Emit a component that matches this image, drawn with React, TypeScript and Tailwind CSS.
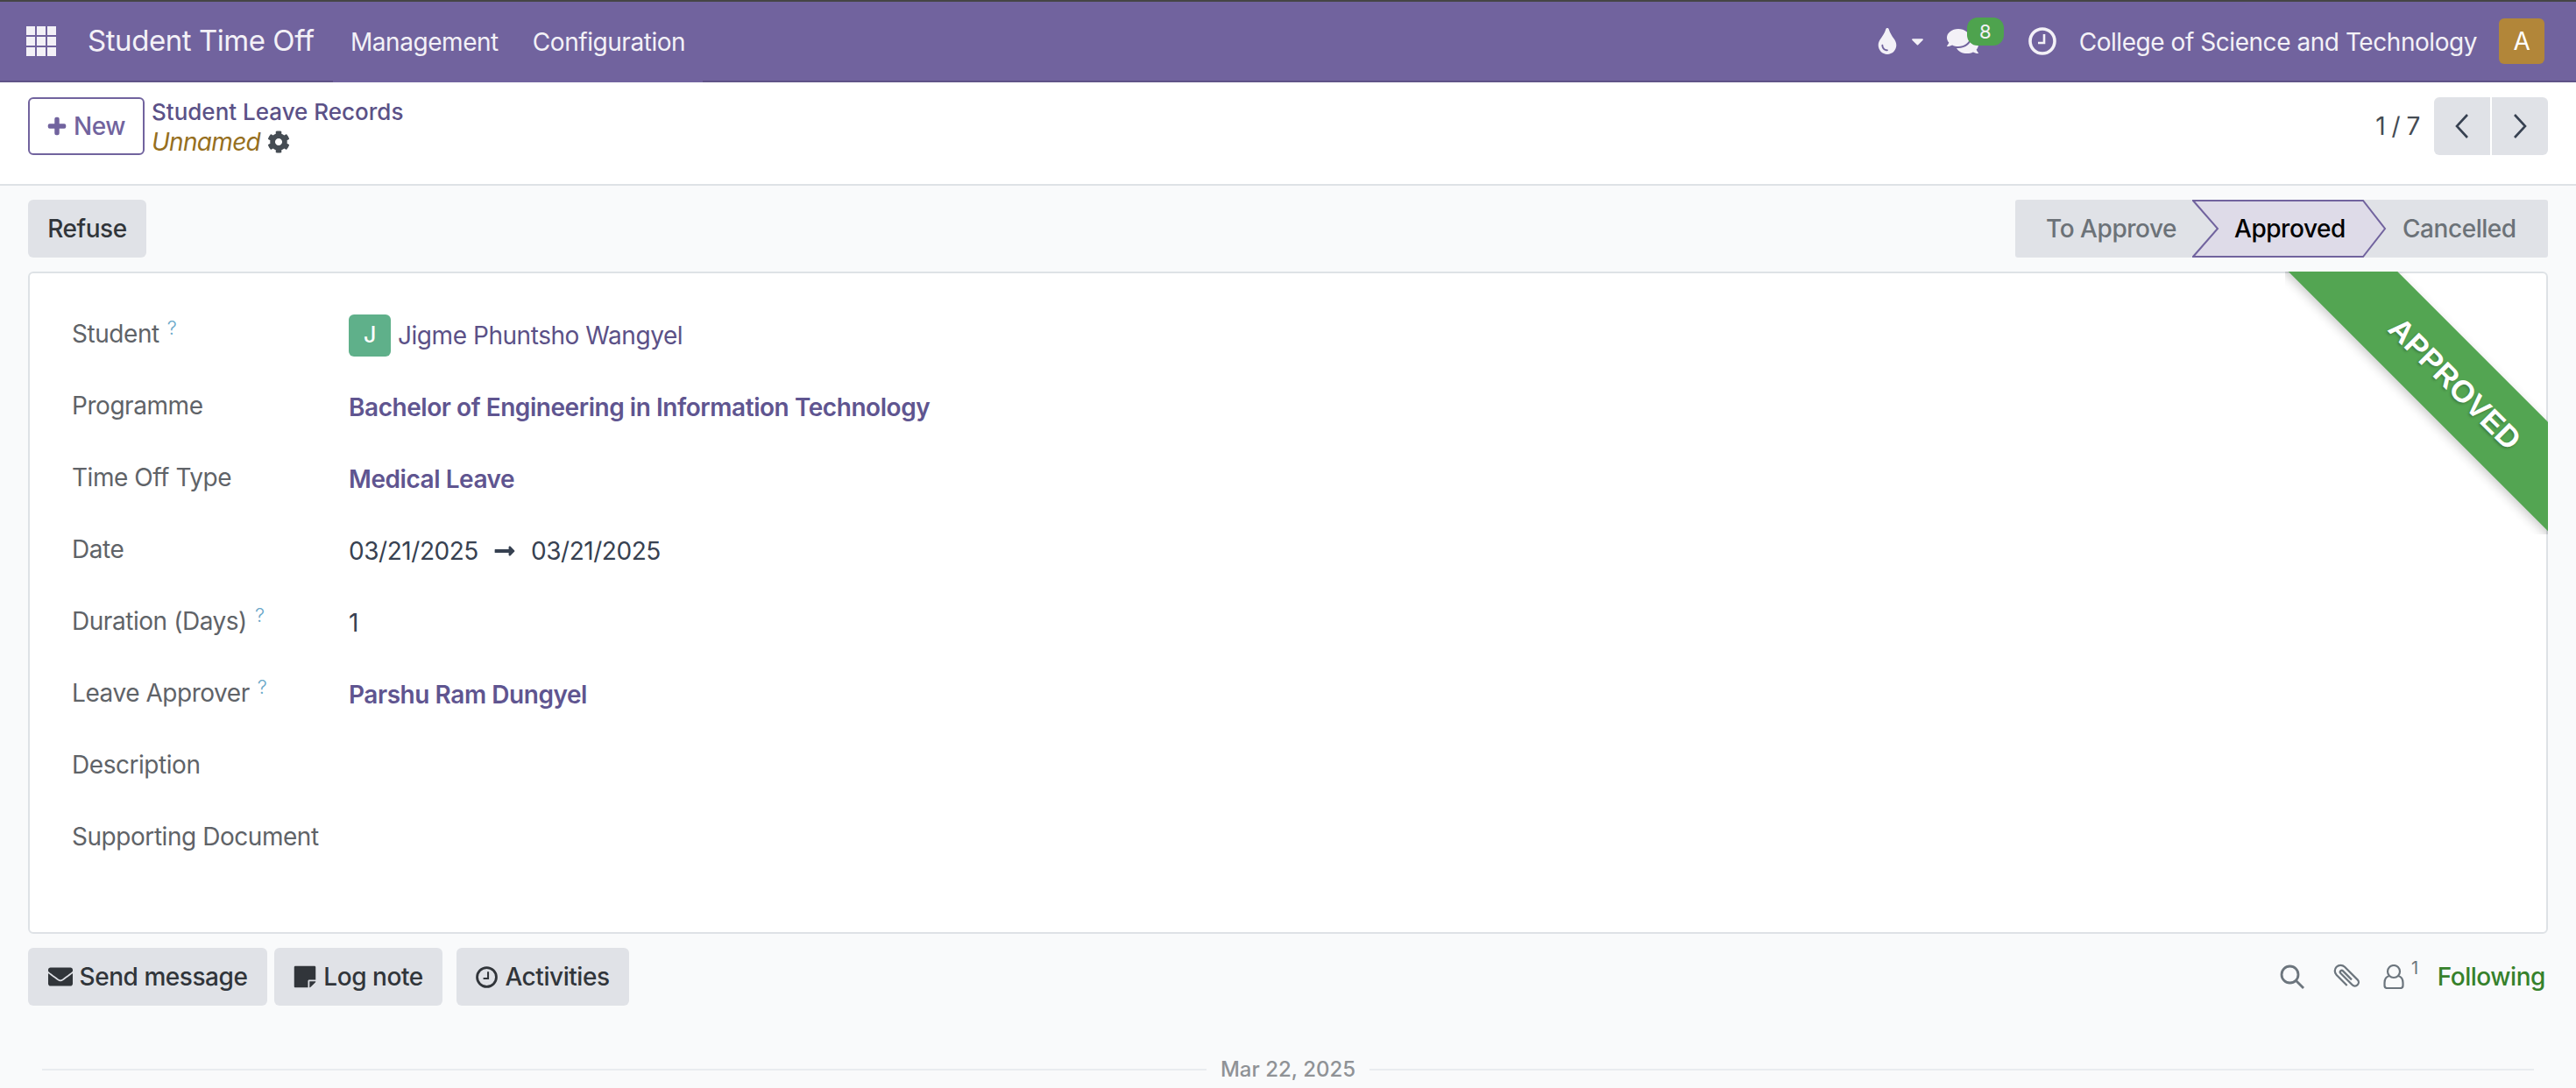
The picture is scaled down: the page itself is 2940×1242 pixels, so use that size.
import React from "react";
import {
  FaCaretDown,
  FaCog,
  FaComments,
  FaEnvelope,
  FaLongArrowAltRight,
  FaPlus,
  FaStickyNote,
  FaTint,
} from "react-icons/fa";

function Help() {
  return <sup className="ml-[9px] text-[22px] font-light text-[#6aa8c9] relative -top-[9px]">?</sup>;
}

function Field(props: { label: string; help?: boolean; children?: React.ReactNode }) {
  return (
    <div className="flex h-[82px] items-center">
      <div className="w-[316px] shrink-0 -mt-[4px] text-[#5f6368] whitespace-nowrap">
        {props.label}
        {props.help && <Help />}
      </div>
      <div className="flex items-center">{props.children}</div>
    </div>
  );
}

function AppsIcon() {
  const cells = [0, 1, 2, 3, 4, 5, 6, 7, 8];
  return (
    <div className="grid h-[34px] w-[34px] grid-cols-3 gap-[2px]">
      {cells.map((c) => (
        <div key={c} className="bg-[#f3f1f7]" />
      ))}
    </div>
  );
}

function ClockIcon(props: { size: number }) {
  return (
    <svg width={props.size} height={props.size} viewBox="0 0 32 32" fill="none" stroke="currentColor" strokeWidth="3.6">
      <circle cx="16" cy="16" r="14" />
      <path d="M18 8 V18 H11" strokeWidth="2.6" />
    </svg>
  );
}

function ChatterButton(props: { icon: React.ReactNode; label: string; width: string }) {
  return (
    <button className={`flex h-[66px] items-center justify-center gap-[8px] rounded-[6px] bg-[#e0e2e7] text-[#31353a] font-medium ${props.width}`}>
      {props.icon}
      {props.label}
    </button>
  );
}

function App() {
  return (
    <div className="h-[1242px] w-[2940px] overflow-hidden bg-[#f9fafb] text-[28px] tracking-[-0.45px] text-[#374151] font-['Inter',sans-serif]">
      <header className="flex h-[94px] items-center border-t-2 border-b-2 border-t-[#454545] border-b-[#5f5387] bg-[#71639e] text-[#f3f1f7]">
        <div className="ml-[30px] w-[70px]">
          <AppsIcon />
        </div>
        <span className="w-[300px] text-[33px] whitespace-nowrap">Student Time Off</span>
        <nav className="flex h-[92px] w-[422px] -ml-[20px] items-center gap-[39px] border-b-2 border-[#71639e] pl-[20px] translate-y-[1px]">
          <span className="translate-y-[1px]">Management</span>
          <span className="translate-y-[1px]">Configuration</span>
        </nav>
        <div className="ml-auto flex items-center pr-[36px]">
          <FaTint className="h-[30px] w-[22px]" />
          <FaCaretDown className="ml-[16px] h-[22px] w-[15px]" />
          <div className="relative ml-[25px] mr-[56px] h-[32px] w-[38px]">
            <FaComments className="h-[32px] w-[38px]" />
            <span className="absolute -top-[11px] left-[24px] flex h-[32px] w-[42px] items-center justify-center rounded-[12px] bg-[#4ea34e] text-[22px] text-[#f3f1f7]">8</span>
          </div>
          <ClockIcon size={32} />
          <span className="ml-[26px] translate-y-[1px] whitespace-nowrap">College of Science and Technology</span>
          <div className="ml-[25px] flex h-[52px] w-[52px] items-center justify-center rounded-[6px] bg-[#b28639] text-white">A</div>
        </div>
      </header>

      <div className="flex h-[118px] items-start justify-between border-b-2 border-[#dee2e6] bg-white pl-[32px] pr-[32px] pt-[17px]">
        <div className="flex">
          <button className="flex h-[66px] w-[133px] items-center justify-center gap-[8px] rounded-[6px] border-2 border-[#71639e] font-medium text-[#71639e]">
            <FaPlus className="h-[22px] w-[22px]" stroke="currentColor" strokeWidth={30} />
            New
          </button>
          <div className="ml-[8px]">
            <div className="h-[34px] text-[26px] leading-[34px] font-medium tracking-normal text-[#5b5187] whitespace-nowrap">Student Leave Records</div>
            <div className="flex h-[34px] items-center">
              <span className="italic tracking-[-0.7px] text-[#966f1e]">Unnamed</span>
              <FaCog className="ml-[8px] h-[26px] w-[26px] text-[#454c53]" />
            </div>
          </div>
        </div>
        <div className="flex items-center">
          <span className="mr-[16px] text-[#454c53]">1 / 7</span>
          <button className="flex h-[66px] w-[64px] items-center justify-center rounded-l-[6px] bg-[#e0e2e7]">
            <svg width="18" height="28" viewBox="0 0 18 28" fill="none" stroke="#374151" strokeWidth="2.6">
              <path d="M15 1 L3 14 L15 27" />
            </svg>
          </button>
          <button className="ml-[2px] flex h-[66px] w-[64px] items-center justify-center rounded-r-[6px] bg-[#e0e2e7]">
            <svg width="18" height="28" viewBox="0 0 18 28" fill="none" stroke="#374151" strokeWidth="2.6">
              <path d="M3 1 L15 14 L3 27" />
            </svg>
          </button>
        </div>
      </div>

      <div className="mt-[16px] flex h-[66px] items-stretch justify-between px-[32px]">
        <button className="w-[135px] rounded-[6px] bg-[#e0e2e7] font-medium text-[#31353a]">Refuse</button>
        <div className="flex w-[608px] rounded-[3px] bg-[#e0e2e7] font-medium text-[#6c7278]">
          <div className="flex w-[202px] items-center pl-[35px] whitespace-nowrap">To Approve</div>
          <div className="relative flex w-[222px] items-center pl-[48px] text-black">
            <svg className="absolute left-0 top-0" width="222" height="66" viewBox="0 0 222 66" fill="#dedbe8" stroke="#71639e" strokeWidth="2">
              <path d="M1 1 H195 L220 33 L195 65 H1 L29 33 Z" />
            </svg>
            <span className="relative">Approved</span>
          </div>
          <div className="flex flex-1 items-center pl-[18px]">Cancelled</div>
        </div>
      </div>

      <main className="relative mx-[32px] mt-[16px] h-[756px] rounded-[6px] border-2 border-[#dee2e6] bg-white pl-[48px] pt-[30px]">
        <Field label="Student" help>
          <div className="flex h-[48px] w-[48px] items-center justify-center rounded-[6px] bg-[#5fb08a] text-[25px] font-medium text-white">J</div>
          <span className="ml-[8px] text-[#5b5187] whitespace-nowrap">Jigme Phuntsho Wangyel</span>
        </Field>
        <Field label="Programme">
          <span className="font-semibold text-[#5f5590] whitespace-nowrap">Bachelor of Engineering in Information Technology</span>
        </Field>
        <Field label="Time Off Type">
          <span className="font-semibold text-[#5f5590]">Medical Leave</span>
        </Field>
        <Field label="Date">
          <span>03/21/2025</span>
          <FaLongArrowAltRight className="mx-[13px] h-[26px] w-[34px]" />
          <span>03/21/2025</span>
        </Field>
        <Field label="Duration (Days)" help>
          <span>1</span>
        </Field>
        <Field label="Leave Approver" help>
          <span className="font-semibold text-[#5f5590]">Parshu Ram Dungyel</span>
        </Field>
        <Field label="Description" />
        <Field label="Supporting Document" />

        <div className="absolute -right-[2px] -top-[2px] h-[300px] w-[300px] overflow-hidden">
          <div className="absolute left-[-56px] top-[84px] flex h-[88px] w-[500px] rotate-45 items-center justify-center bg-[#53a552] text-[35px] font-bold tracking-normal text-white font-['Liberation_Sans',sans-serif] shadow-[0_4px_12px_rgba(0,0,0,0.2)] [text-shadow:0_2px_3px_rgba(0,0,0,0.25)]">
            APPROVED
          </div>
        </div>
      </main>

      <div className="mt-[16px] flex h-[66px] items-center pl-[32px] pr-[35px]">
        <div className="flex gap-[8px]">
          <ChatterButton icon={<FaEnvelope className="h-[28px] w-[28px]" />} label="Send message" width="w-[273px]" />
          <ChatterButton icon={<FaStickyNote className="h-[28px] w-[26px]" />} label="Log note" width="w-[192px]" />
          <div className="ml-[8px]">
            <ChatterButton icon={<ClockIcon size={25} />} label="Activities" width="w-[197px]" />
          </div>
        </div>
        <div className="ml-auto flex items-center text-[#6c757d]">
          <svg width="28" height="28" viewBox="0 0 28 28" fill="none" stroke="#6c757d" strokeWidth="2.8">
            <circle cx="11.5" cy="11.5" r="9.5" />
            <path d="M18.5 18.5 L27 27" />
          </svg>
          <svg className="ml-[32px]" width="32" height="34" viewBox="-3 1 34 34" fill="none" stroke="#6c757d" strokeWidth="2.4">
            <path transform="rotate(-45 14 18)" d="M7 26 V8 a7 7 0 0 1 14 0 V30 a4.5 4.5 0 0 1 -9 0 V10 a2 2 0 0 1 4 0 V25" />
          </svg>
          <svg className="ml-[26px]" width="24" height="28" viewBox="0 0 24 28" fill="none" stroke="#6c757d" strokeWidth="2.2">
            <circle cx="12" cy="8" r="7" />
            <path d="M7 13 C3 14 1.5 17 1.5 21 V24 a3 3 0 0 0 3 3 H19.5 a3 3 0 0 0 3 -3 V21 C22.5 17 21 14 17 13" />
          </svg>
          <span className="ml-[8px] -mt-[20px] text-[20px]">1</span>
          <span className="ml-[22px] font-medium text-[#36812b]">Following</span>
        </div>
      </div>

      <div className="mx-[48px] mt-[55px] flex items-center">
        <div className="h-[2px] flex-1 bg-[#e9ecef]" />
        <span className="mx-[16px] text-[24px] font-medium tracking-normal text-[#8f9296]">Mar 22, 2025</span>
        <div className="h-[2px] flex-1 bg-[#e9ecef]" />
      </div>
    </div>
  );
}

export default App;
